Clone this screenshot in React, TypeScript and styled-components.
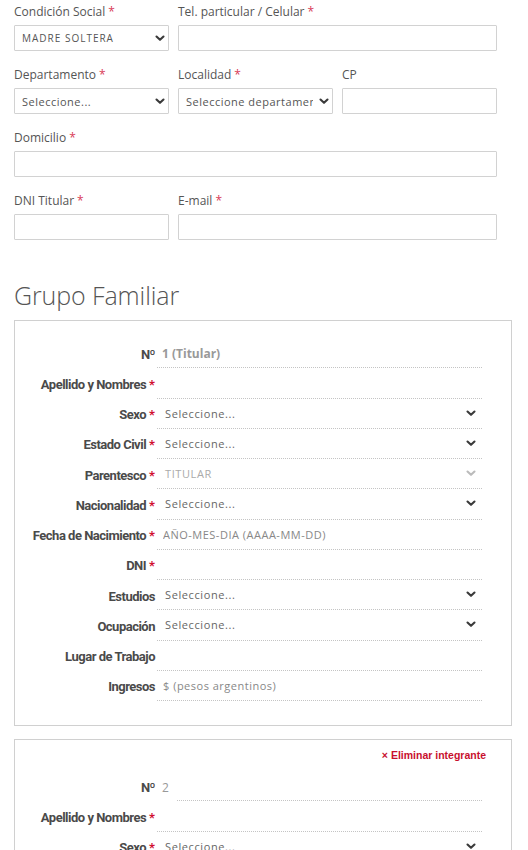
import styled, { createGlobalStyle } from 'styled-components';

const GlobalStyle = createGlobalStyle`
  body {
    margin: 0;
    background: #fff;
    font-family: "Open Sans", "Liberation Sans", sans-serif;
    color: #555;
  }
  * { box-sizing: border-box; }
`;

const Page = styled.main`
  width: 528px;
  padding: 4px 31px 0 14px;
`;

const FormGrid = styled.div`
  display: grid;
  grid-template-columns: repeat(3, 1fr);
  column-gap: 9px;
  row-gap: 16px;
`;

const Field = styled.div<{ $span?: number }>`
  grid-column: span ${(p) => p.$span ?? 1};
  display: flex;
  flex-direction: column;
  min-width: 0;
`;

const Label = styled.label`
  font-size: 12px;
  line-height: 16px;
  height: 16px;
  margin-bottom: 5px;
  color: #555;
`;

const Req = styled.span`
  color: #d93a57;
  margin-left: 3px;
`;

const TextInput = styled.input`
  height: 26px;
  width: 100%;
  border: 1px solid #d2d2d2;
  border-radius: 1px;
  padding: 0 8px;
  font: inherit;
  font-size: 11px;
  outline: none;
  background: #fff;
`;

const SelectBox = styled.div`
  height: 26px;
  border: 1px solid #d2d2d2;
  border-radius: 1px;
  display: flex;
  align-items: center;
  padding: 0 3px 0 7px;
  gap: 6px;
  background: #fff;
`;

const SelectText = styled.span<{ $upper?: boolean }>`
  flex: 1;
  min-width: 0;
  overflow: hidden;
  white-space: nowrap;
  font-size: ${(p) => (p.$upper ? '10px' : '11px')};
  letter-spacing: ${(p) => (p.$upper ? '1px' : '0.5px')};
  color: #555;
`;

const Heading = styled.h2`
  margin: 40px 0 10px;
  font-weight: 300;
  font-size: 25px;
  line-height: 30px;
  color: #555;
  letter-spacing: -0.1px;
`;

const Card = styled.section<{ $top: number; $bottom: number }>`
  width: 498px;
  border: 1px solid #d0d0d0;
  padding: ${(p) => p.$top}px 29px ${(p) => p.$bottom}px 0;
  margin-bottom: 13px;
`;

const RemoveLink = styled.a`
  display: block;
  text-align: right;
  font-family: "Liberation Sans", Arial, sans-serif;
  font-weight: bold;
  font-size: 10.5px;
  line-height: 14px;
  color: #c8102e;
  margin: 0 -4px 9px 0;
  cursor: pointer;
`;

const Row = styled.div`
  display: grid;
  grid-template-columns: 140px 1fr;
  column-gap: 2px;
  height: 30.25px;
`;

const RowLabel = styled.div`
  text-align: right;
  align-self: center;
  padding-top: 2px;
  font-family: Roboto, "Liberation Sans", sans-serif;
  font-weight: 700;
  font-size: 13px;
  letter-spacing: -0.5px;
  color: #4a4a4a;
  white-space: nowrap;
`;

const RowReq = styled.span`
  color: #d0102f;
  margin-left: 3px;
  letter-spacing: 0;
`;

const RowValue = styled.div`
  display: flex;
  align-items: center;
  border-bottom: 1px dotted #c4c4c4;
  padding: 0 6px 0 8px;
  min-width: 0;
`;

const NumberRow = styled.div<{ $lineFromText?: boolean }>`
  display: flex;
  align-items: stretch;
  border-bottom: ${(p) => (p.$lineFromText ? 'none' : '1px dotted #c4c4c4')};
`;

const NumberText = styled.span<{ $bold?: boolean }>`
  align-self: center;
  padding: 2px 0 0 5px;
  font-size: 12px;
  font-weight: ${(p) => (p.$bold ? 700 : 400)};
  color: #999;
  white-space: nowrap;
`;

const NumberLine = styled.div`
  flex: 1;
  border-bottom: 1px dotted #c4c4c4;
  margin-left: 8px;
`;

const ValueText = styled.span<{ $muted?: boolean }>`
  flex: 1;
  font-size: 11px;
  letter-spacing: 0.6px;
  color: ${(p) => (p.$muted ? '#aaa' : '#666')};
  white-space: nowrap;
`;

const PlainInput = styled.input`
  flex: 1;
  min-width: 0;
  border: none;
  outline: none;
  background: transparent;
  font-family: "Open Sans", "Liberation Sans", sans-serif;
  font-size: 11px;
  letter-spacing: 0.5px;
  margin-left: -4px;
  color: #555;
  &::placeholder {
    color: #888;
  }
`;

function Chevron({ color = '#3a3a3a' }: { color?: string }) {
  return (
    <svg width="10" height="7" viewBox="0 0 10 7" aria-hidden>
      <polyline points="1.5,1.5 5,4.8 8.5,1.5" fill="none" stroke={color} strokeWidth="2.1" strokeLinecap="round" strokeLinejoin="round" />
    </svg>
  );
}

type MemberRow =
  | { label: string; req?: boolean; kind: 'select'; value?: string; disabled?: boolean }
  | { label: string; req?: boolean; kind: 'input'; placeholder?: string };

const MEMBER_ROWS: MemberRow[] = [
  { label: 'Apellido y Nombres', req: true, kind: 'input' },
  { label: 'Sexo', req: true, kind: 'select' },
  { label: 'Estado Civil', req: true, kind: 'select' },
  { label: 'Parentesco', req: true, kind: 'select', value: 'TITULAR', disabled: true },
  { label: 'Nacionalidad', req: true, kind: 'select' },
  { label: 'Fecha de Nacimiento', req: true, kind: 'input', placeholder: 'AÑO-MES-DIA (AAAA-MM-DD)' },
  { label: 'DNI', req: true, kind: 'input' },
  { label: 'Estudios', kind: 'select' },
  { label: 'Ocupación', kind: 'select' },
  { label: 'Lugar de Trabajo', kind: 'input' },
  { label: 'Ingresos', kind: 'input', placeholder: '$ (pesos argentinos)' },
];

function MemberField({ row }: { row: MemberRow }) {
  return (
    <Row>
      <RowLabel>
        {row.label}
        {row.req && <RowReq>*</RowReq>}
      </RowLabel>
      <RowValue>
        {row.kind === 'select' ? (
          <>
            <ValueText $muted={row.disabled}>{row.value ?? 'Seleccione...'}</ValueText>
            <Chevron color={row.disabled ? '#bbb' : '#3a3a3a'} />
          </>
        ) : (
          <PlainInput placeholder={row.placeholder} />
        )}
      </RowValue>
    </Row>
  );
}

function Select({ value, upper }: { value: string; upper?: boolean }) {
  return (
    <SelectBox>
      <SelectText $upper={upper}>{value}</SelectText>
      <Chevron />
    </SelectBox>
  );
}

export default function App() {
  return (
    <>
      <GlobalStyle />
      <Page>
        <FormGrid>
          <Field>
            <Label>Condición Social<Req>*</Req></Label>
            <Select value="MADRE SOLTERA" upper />
          </Field>
          <Field $span={2}>
            <Label>Tel. particular / Celular<Req>*</Req></Label>
            <TextInput />
          </Field>
          <Field>
            <Label>Departamento<Req>*</Req></Label>
            <Select value="Seleccione..." />
          </Field>
          <Field>
            <Label>Localidad<Req>*</Req></Label>
            <Select value="Seleccione departamento..." />
          </Field>
          <Field>
            <Label>CP</Label>
            <TextInput />
          </Field>
          <Field $span={3}>
            <Label>Domicilio<Req>*</Req></Label>
            <TextInput />
          </Field>
          <Field>
            <Label>DNI Titular<Req>*</Req></Label>
            <TextInput />
          </Field>
          <Field $span={2}>
            <Label>E-mail<Req>*</Req></Label>
            <TextInput />
          </Field>
        </FormGrid>

        <Heading>Grupo Familiar</Heading>

        <Card $top={17} $bottom={24}>
          <Row>
            <RowLabel>Nº</RowLabel>
            <NumberRow>
              <NumberText $bold>1 (Titular)</NumberText>
            </NumberRow>
          </Row>
          {MEMBER_ROWS.map((r) => (
            <MemberField key={r.label} row={r} />
          ))}
        </Card>

        <Card $top={8} $bottom={24}>
          <RemoveLink>× Eliminar integrante</RemoveLink>
          <Row>
            <RowLabel>Nº</RowLabel>
            <NumberRow $lineFromText>
              <NumberText>2</NumberText>
              <NumberLine />
            </NumberRow>
          </Row>
          {MEMBER_ROWS.map((r) => (
            <MemberField key={r.label} row={r} />
          ))}
        </Card>
      </Page>
    </>
  );
}
